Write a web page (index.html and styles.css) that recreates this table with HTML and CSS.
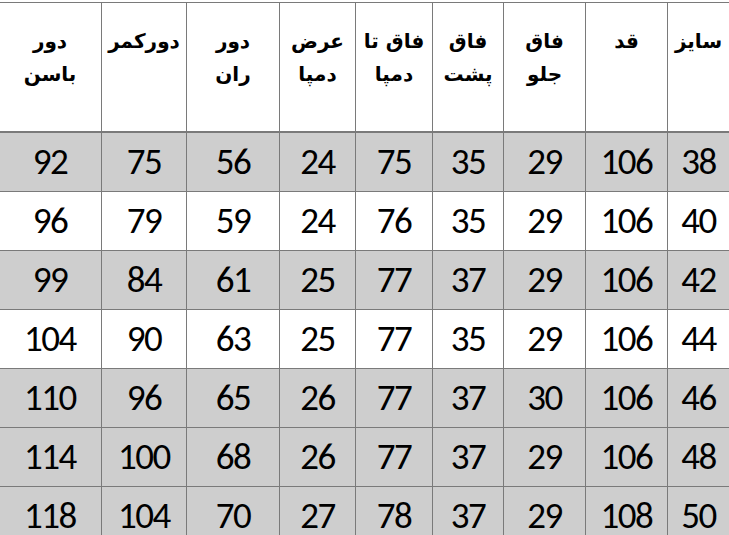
FILE: index.html
```html
<!DOCTYPE html>
<html lang="fa" dir="rtl">
<head>
<meta charset="utf-8">
<link rel="stylesheet" href="styles.css">
</head>
<body>
<table class="sizes">
  <colgroup>
    <col class="c-size"><col class="c-qad"><col class="c-front"><col class="c-back"><col class="c-inseam"><col class="c-hem"><col class="c-thigh"><col class="c-waist"><col class="c-hip">
  </colgroup>
  <thead>
    <tr>
      <th>سایز</th>
      <th>قد</th>
      <th>فاق<br>جلو</th>
      <th>فاق<br>پشت</th>
      <th>فاق تا<br>دمپا</th>
      <th>عرض<br>دمپا</th>
      <th>دور<br>ران</th>
      <th>دورکمر</th>
      <th>دور<br>باسن</th>
    </tr>
  </thead>
  <tbody>
    <tr class="shade"><td>38</td><td>106</td><td>29</td><td>35</td><td>75</td><td>24</td><td>56</td><td>75</td><td>92</td></tr>
    <tr><td>40</td><td>106</td><td>29</td><td>35</td><td>76</td><td>24</td><td>59</td><td>79</td><td>96</td></tr>
    <tr class="shade"><td>42</td><td>106</td><td>29</td><td>37</td><td>77</td><td>25</td><td>61</td><td>84</td><td>99</td></tr>
    <tr><td>44</td><td>106</td><td>29</td><td>35</td><td>77</td><td>25</td><td>63</td><td>90</td><td>104</td></tr>
    <tr class="shade"><td>46</td><td>106</td><td>30</td><td>37</td><td>77</td><td>26</td><td>65</td><td>96</td><td>110</td></tr>
    <tr class="shade"><td>48</td><td>106</td><td>29</td><td>37</td><td>77</td><td>26</td><td>68</td><td>100</td><td>114</td></tr>
    <tr class="shade"><td>50</td><td>108</td><td>29</td><td>37</td><td>78</td><td>27</td><td>70</td><td>104</td><td>118</td></tr>
  </tbody>
</table>
</body>
</html>
```
FILE: styles.css
```css
html, body {
  margin: 0;
  padding: 0;
  background: #ffffff;
  overflow: hidden;
}
body {
  padding-top: 2px;
  width: 729px;
  height: 535px;
}
.sizes {
  border-collapse: collapse;
  table-layout: fixed;
  width: 731px;
  margin-right: -1px;
  direction: rtl;
}
.c-size { width: 62px; }
.c-qad { width: 82px; }
.c-front { width: 82px; }
.c-back { width: 71px; }
.c-inseam { width: 77px; }
.c-hem { width: 76px; }
.c-thigh { width: 93px; }
.c-waist { width: 85px; }
.c-hip { width: 103px; }

.sizes th, .sizes td {
  border: 1px solid #7a7a7a;
  padding: 0;
  text-align: center;
  color: #000;
}
.sizes th {
  height: 129px;
  vertical-align: top;
  padding-top: 22px;
  box-sizing: border-box;
  font-family: "DejaVu Sans", "Liberation Sans", sans-serif;
  font-weight: bold;
  font-size: 20px;
  line-height: 33px;
  border-bottom: 2px solid #7a7a7a;
}
.sizes td {
  height: 59px;
  box-sizing: border-box;
  font-family: "Carlito", "Lato", "Open Sans", sans-serif;
  font-size: 37px;
  letter-spacing: -1.5px;
  line-height: 58px;
  vertical-align: middle;
}
.sizes tr.shade td {
  background: #cecece;
}
```
